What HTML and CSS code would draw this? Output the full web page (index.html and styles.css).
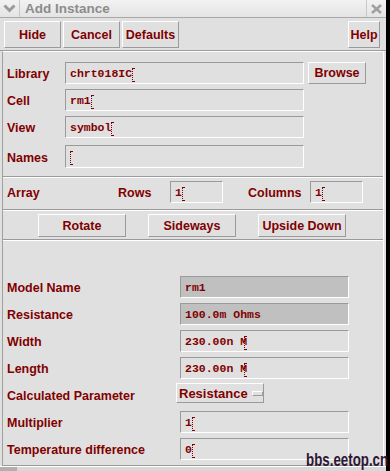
FILE: index.html
```html
<!DOCTYPE html>
<html lang="en">
<head>
    <meta charset="UTF-8">
    <title>Add Instance</title>
    <link rel="stylesheet" href="styles.css">
</head>
<body>
<div class="window">
    <div class="titlebar">
        <div class="title-menu">
            <svg width="13" height="9" viewBox="0 0 13 9"><polyline points="1.5,1.5 6.5,6.5 11.5,1.5" fill="none" stroke="#9a9a9a" stroke-width="3"/></svg>
        </div>
        <div class="title-text">Add Instance</div>
        <div class="title-close">
            <svg width="11" height="10" viewBox="0 0 11 10"><path d="M1 1 L10 9 M10 1 L1 9" stroke="#a0a0a0" stroke-width="2.6"/></svg>
        </div>
    </div>

    <div class="toolbar">
        <button class="btn tool">Hide</button>
        <button class="btn tool">Cancel</button>
        <button class="btn tool">Defaults</button>
        <span class="spacer"></span>
        <button class="btn help">Help</button>
    </div>

    <div class="frame">
        <div class="section lib-section">
            <div class="row">
                <span class="label lib-label">Library</span>
                <div class="field lib-field">chrt018IC<span class="caret"></span></div>
                <button class="btn browse">Browse</button>
            </div>
            <div class="row">
                <span class="label lib-label">Cell</span>
                <div class="field lib-field">rm1<span class="caret"></span></div>
            </div>
            <div class="row">
                <span class="label lib-label">View</span>
                <div class="field lib-field">symbol<span class="caret"></span></div>
            </div>
            <div class="row names-row">
                <span class="label lib-label">Names</span>
                <div class="field lib-field"><span class="caret"></span></div>
            </div>
        </div>

        <div class="section array-section">
            <div class="row">
                <span class="label array-label">Array</span>
                <span class="label rows-label">Rows</span>
                <div class="field small-field">1<span class="caret"></span></div>
                <span class="label cols-label">Columns</span>
                <div class="field small-field">1<span class="caret"></span></div>
            </div>
        </div>

        <div class="section orient-section">
            <button class="btn orient">Rotate</button>
            <button class="btn orient">Sideways</button>
            <button class="btn orient">Upside Down</button>
        </div>

        <div class="section param-section">
            <div class="row">
                <span class="label param-label">Model Name</span>
                <div class="field param-field readonly">rm1</div>
            </div>
            <div class="row">
                <span class="label param-label">Resistance</span>
                <div class="field param-field readonly">100.0m Ohms</div>
            </div>
            <div class="row">
                <span class="label param-label">Width</span>
                <div class="field param-field">230.00n M<span class="caret over"></span></div>
            </div>
            <div class="row">
                <span class="label param-label">Length</span>
                <div class="field param-field">230.00n M<span class="caret over"></span></div>
            </div>
            <div class="row">
                <span class="label param-label">Calculated Parameter</span>
                <button class="btn cyclic">Resistance <span class="cyclic-mark"></span></button>
            </div>
            <div class="row">
                <span class="label param-label">Multiplier</span>
                <div class="field param-field">1<span class="caret"></span></div>
            </div>
            <div class="row">
                <span class="label param-label">Temperature difference</span>
                <div class="field param-field">0<span class="caret"></span></div>
            </div>
        </div>
    </div>

    <div class="statusbar">
        <span class="status-left"></span>
    </div>
</div>
<div class="watermark">bbs.eetop.cn</div>
</body>
</html>
```

FILE: styles.css
```css
body {
    position: relative;
    margin: 0;
    background-color: #000;
    font-family: "Liberation Sans", Arial, sans-serif;
}
.window {
    width: 386px;
    height: 471px;
    background-color: #e0e0e0;
    overflow: hidden;
}
.titlebar {
    height: 17px;
    display: flex;
    align-items: center;
    border-bottom: 1px solid #a8a8a8;
    background: linear-gradient(#f2f2f2, #e4e4e4);
}
.title-menu {
    width: 19px;
    height: 17px;
    display: flex;
    align-items: center;
    justify-content: center;
    border-right: 1px solid #c8c8c8;
}
.title-text {
    flex: 1;
    margin-left: 5px;
    font-size: 13.5px;
    font-weight: bold;
    color: #8c8c8c;
}
.title-close {
    width: 19px;
    height: 17px;
    display: flex;
    align-items: center;
    justify-content: center;
    border-left: 1px solid #c8c8c8;
}
.btn {
    box-sizing: border-box;
    padding: 0;
    background-color: #e0e0e0;
    border: 1px solid;
    border-color: #fff #9a9a9a #9a9a9a #fff;
    color: #800000;
    font-family: "Liberation Sans", Arial, sans-serif;
    font-size: 12.5px;
    font-weight: bold;
}
.toolbar {
    display: flex;
    box-sizing: border-box;
    height: 33px;
    padding: 3px 6px 0 4px;
    border-bottom: 1px solid #9a9a9a;
}
.tool {
    width: 57px;
    height: 27px;
    margin-right: 2px;
}
.spacer {
    flex: 1;
}
.help {
    width: 32px;
    height: 27px;
}
.frame {
    width: 382px;
    margin-left: 2px;
    box-sizing: border-box;
    border-top: 1px solid #fff;
    border-left: 1px solid #a0a0a0;
    border-right: 1px solid #fff;
    border-bottom: 1px solid #9a9a9a;
}
.section {
    border-top: 1px solid #fff;
    border-bottom: 1px solid #9a9a9a;
    padding-left: 4px;
}
.section:first-child {
    border-top: none;
}
.section:last-child {
    border-bottom: none;
}
.row {
    display: flex;
    align-items: center;
    height: 22px;
    margin-bottom: 5px;
}
.row:last-child {
    margin-bottom: 0;
}
.label {
    padding-top: 2px;
    color: #800000;
    font-size: 12.5px;
    font-weight: bold;
    white-space: nowrap;
}
.field {
    box-sizing: border-box;
    height: 22px;
    padding-left: 4px;
    display: flex;
    align-items: center;
    border: 1px solid;
    border-color: #9a9a9a #fff #fff #9a9a9a;
    color: #800000;
    font-family: "Liberation Mono", "Courier New", monospace;
    font-size: 11.5px;
    font-weight: bold;
    white-space: pre;
}
.readonly {
    background-color: #c0c0c0;
}
.caret {
    display: inline-block;
    box-sizing: border-box;
    width: 2px;
    height: 14px;
    margin-top: 3px;
    border-left: 1px dotted #800000;
    border-top: 1px dotted #800000;
    border-bottom: 1px dotted #800000;
}
.caret.over {
    margin-left: -3px;
}

/* library / cell / view */
.lib-section {
    padding-top: 10px;
    padding-bottom: 8px;
}
.names-row {
    margin-top: 7px;
    height: 23px;
}
.names-row .field {
    height: 23px;
}
.lib-label {
    width: 58px;
}
.lib-field {
    width: 239px;
}
.browse {
    width: 58px;
    height: 22px;
    margin-left: 4px;
}

/* array */
.array-section {
    padding-top: 3px;
    padding-bottom: 6px;
}
.array-label {
    width: 111px;
}
.rows-label {
    width: 52px;
}
.small-field {
    width: 53px;
}
.cols-label {
    width: 62px;
    margin-left: 25px;
}

/* orientation buttons */
.orient-section {
    display: flex;
    gap: 22px;
    padding: 3px 0 2px 35px;
}
.orient {
    width: 88px;
    height: 23px;
}

/* instance parameters */
.param-section {
    padding-top: 35px;
    padding-bottom: 5px;
}
.param-label {
    width: 173px;
}
.param-field {
    width: 169px;
}
.cyclic {
    width: 88px;
    height: 20px;
    margin-left: -4px;
    margin-top: -4px;
    display: flex;
    align-items: center;
    padding-left: 2px;
    font-size: 13px;
}
.cyclic-mark {
    display: inline-block;
    width: 10px;
    height: 3px;
    margin-left: 4px;
    border: 1px solid;
    border-color: #fff #9a9a9a #9a9a9a #fff;
}

.statusbar {
    display: flex;
    height: 4px;
    border-top: 1px solid #fff;
    background-color: #d8d8d8;
}
.status-left {
    width: 17px;
    background-color: #b0b0b0;
}
.watermark {
    position: absolute;
    left: 306px;
    top: 450px;
    width: 84px;
    font-size: 18px;
    line-height: 20px;
    font-weight: bold;
    color: #2e1636;
    white-space: nowrap;
    transform: scaleX(0.74);
    transform-origin: left top;
}
```
